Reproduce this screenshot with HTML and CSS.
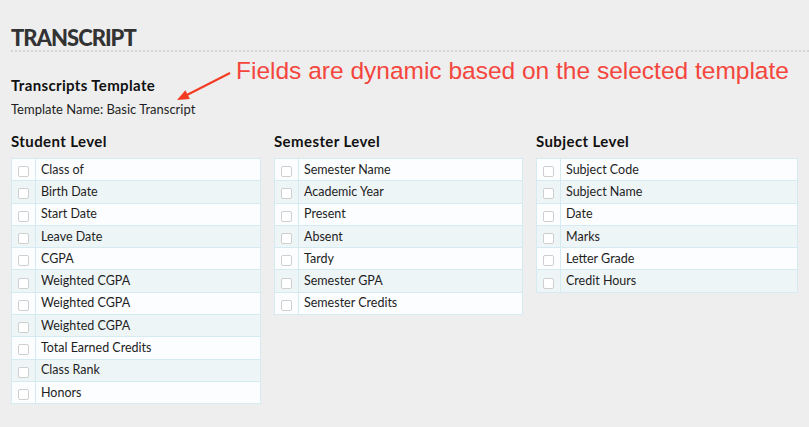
FILE: index.html
```html
<!DOCTYPE html>
<html lang="en">
<head>
    <meta charset="UTF-8">
    <meta name="viewport" content="width=device-width, initial-scale=1.0">
    <title>Transcript</title>
    <link rel="stylesheet" href="styles.css">
</head>
<body>
    <div class="page">
        <h1 class="page-title">TRANSCRIPT</h1>

        <div class="template-info">
            <h2>Transcripts Template</h2>
            <p>Template Name: Basic Transcript</p>
            <svg class="note-arrow" width="60" height="34" viewBox="0 0 60 34">
                <line x1="55" y1="3" x2="9" y2="26.5" stroke="#f23b22" stroke-width="2"/>
                <polygon points="2,30 10.4,20.2 14.9,29.1" fill="#f23b22"/>
            </svg>
            <span class="note">Fields are dynamic based on the selected template</span>
        </div>

        <div class="levels">
            <div class="level">
                <h3>Student Level</h3>
                <table class="field-table">
                    <tr><td class="check"><span class="box"></span></td><td>Class of</td></tr>
                    <tr><td class="check"><span class="box"></span></td><td>Birth Date</td></tr>
                    <tr><td class="check"><span class="box"></span></td><td>Start Date</td></tr>
                    <tr><td class="check"><span class="box"></span></td><td>Leave Date</td></tr>
                    <tr><td class="check"><span class="box"></span></td><td>CGPA</td></tr>
                    <tr><td class="check"><span class="box"></span></td><td>Weighted CGPA</td></tr>
                    <tr><td class="check"><span class="box"></span></td><td>Weighted CGPA</td></tr>
                    <tr><td class="check"><span class="box"></span></td><td>Weighted CGPA</td></tr>
                    <tr><td class="check"><span class="box"></span></td><td>Total Earned Credits</td></tr>
                    <tr><td class="check"><span class="box"></span></td><td>Class Rank</td></tr>
                    <tr><td class="check"><span class="box"></span></td><td>Honors</td></tr>
                </table>
            </div>
            <div class="level">
                <h3>Semester Level</h3>
                <table class="field-table">
                    <tr><td class="check"><span class="box"></span></td><td>Semester Name</td></tr>
                    <tr><td class="check"><span class="box"></span></td><td>Academic Year</td></tr>
                    <tr><td class="check"><span class="box"></span></td><td>Present</td></tr>
                    <tr><td class="check"><span class="box"></span></td><td>Absent</td></tr>
                    <tr><td class="check"><span class="box"></span></td><td>Tardy</td></tr>
                    <tr><td class="check"><span class="box"></span></td><td>Semester GPA</td></tr>
                    <tr><td class="check"><span class="box"></span></td><td>Semester Credits</td></tr>
                </table>
            </div>
            <div class="level">
                <h3>Subject Level</h3>
                <table class="field-table">
                    <tr><td class="check"><span class="box"></span></td><td>Subject Code</td></tr>
                    <tr><td class="check"><span class="box"></span></td><td>Subject Name</td></tr>
                    <tr><td class="check"><span class="box"></span></td><td>Date</td></tr>
                    <tr><td class="check"><span class="box"></span></td><td>Marks</td></tr>
                    <tr><td class="check"><span class="box"></span></td><td>Letter Grade</td></tr>
                    <tr><td class="check"><span class="box"></span></td><td>Credit Hours</td></tr>
                </table>
            </div>
        </div>
    </div>
</body>
</html>
```

FILE: styles.css
```css
:root {
    --bg-color: #eeeeee;
    --title-color: #333333;
    --text-color: #1e1e1e;
    --row-odd: #fbfdfe;
    --row-even: #eef5f7;
    --row-border: #d6ebf1;
    --note-color: #f4463d;
}

body {
    font-family: Lato, 'Open Sans', sans-serif;
    background-color: var(--bg-color);
    color: var(--text-color);
    margin: 0;
    padding: 0;
}

.page {
    padding: 0 0 0 11px;
}

.page-title {
    margin: 0;
    padding-top: 27px;
    padding-bottom: 1px;
    font-size: 22px;
    font-weight: 900;
    line-height: 22px;
    letter-spacing: -1px;
    color: var(--title-color);
    border-bottom: 2px dotted #d3d3d3;
}

.template-info {
    position: relative;
    padding-top: 23px;
}

.template-info h2 {
    margin: 0;
    font-size: 15px;
    font-weight: 700;
    line-height: 20px;
    letter-spacing: 0.35px;
    color: #111;
}

.template-info p {
    margin: 6px 0 0;
    font-size: 13px;
    line-height: 17px;
}

.note-arrow {
    position: absolute;
    left: 164px;
    top: 18px;
}

.note {
    position: absolute;
    left: 225px;
    top: 4px;
    font-family: 'Liberation Sans', Arial, sans-serif;
    font-size: 24.5px;
    line-height: 30px;
    color: var(--note-color);
    white-space: nowrap;
}

.levels {
    display: grid;
    grid-template-columns: 250px 249px 262px;
    column-gap: 13px;
    align-items: start;
    margin-top: 14px;
}

.level h3 {
    margin: 0 0 8px;
    font-size: 15px;
    font-weight: 700;
    line-height: 18px;
    letter-spacing: 0.4px;
    color: #111;
}

.field-table {
    width: 100%;
    border-collapse: collapse;
    border: 1px solid var(--row-border);
    font-size: 12.5px;
}

.field-table tr {
    height: 22.3px;
    background-color: var(--row-odd);
}

.field-table tr:nth-child(even) {
    background-color: var(--row-even);
}

.field-table td {
    border-top: 1px solid var(--row-border);
    padding: 0 0 0 5px;
    line-height: 14px;
}

.field-table td.check {
    width: 23px;
    padding: 0;
    text-align: center;
    border-right: 1px solid var(--row-border);
}

.box {
    display: inline-block;
    width: 9px;
    height: 9px;
    margin-top: 3px;
    border: 1px solid #cfcfcf;
    border-radius: 2px;
    background-color: #fff;
    vertical-align: middle;
}
```
